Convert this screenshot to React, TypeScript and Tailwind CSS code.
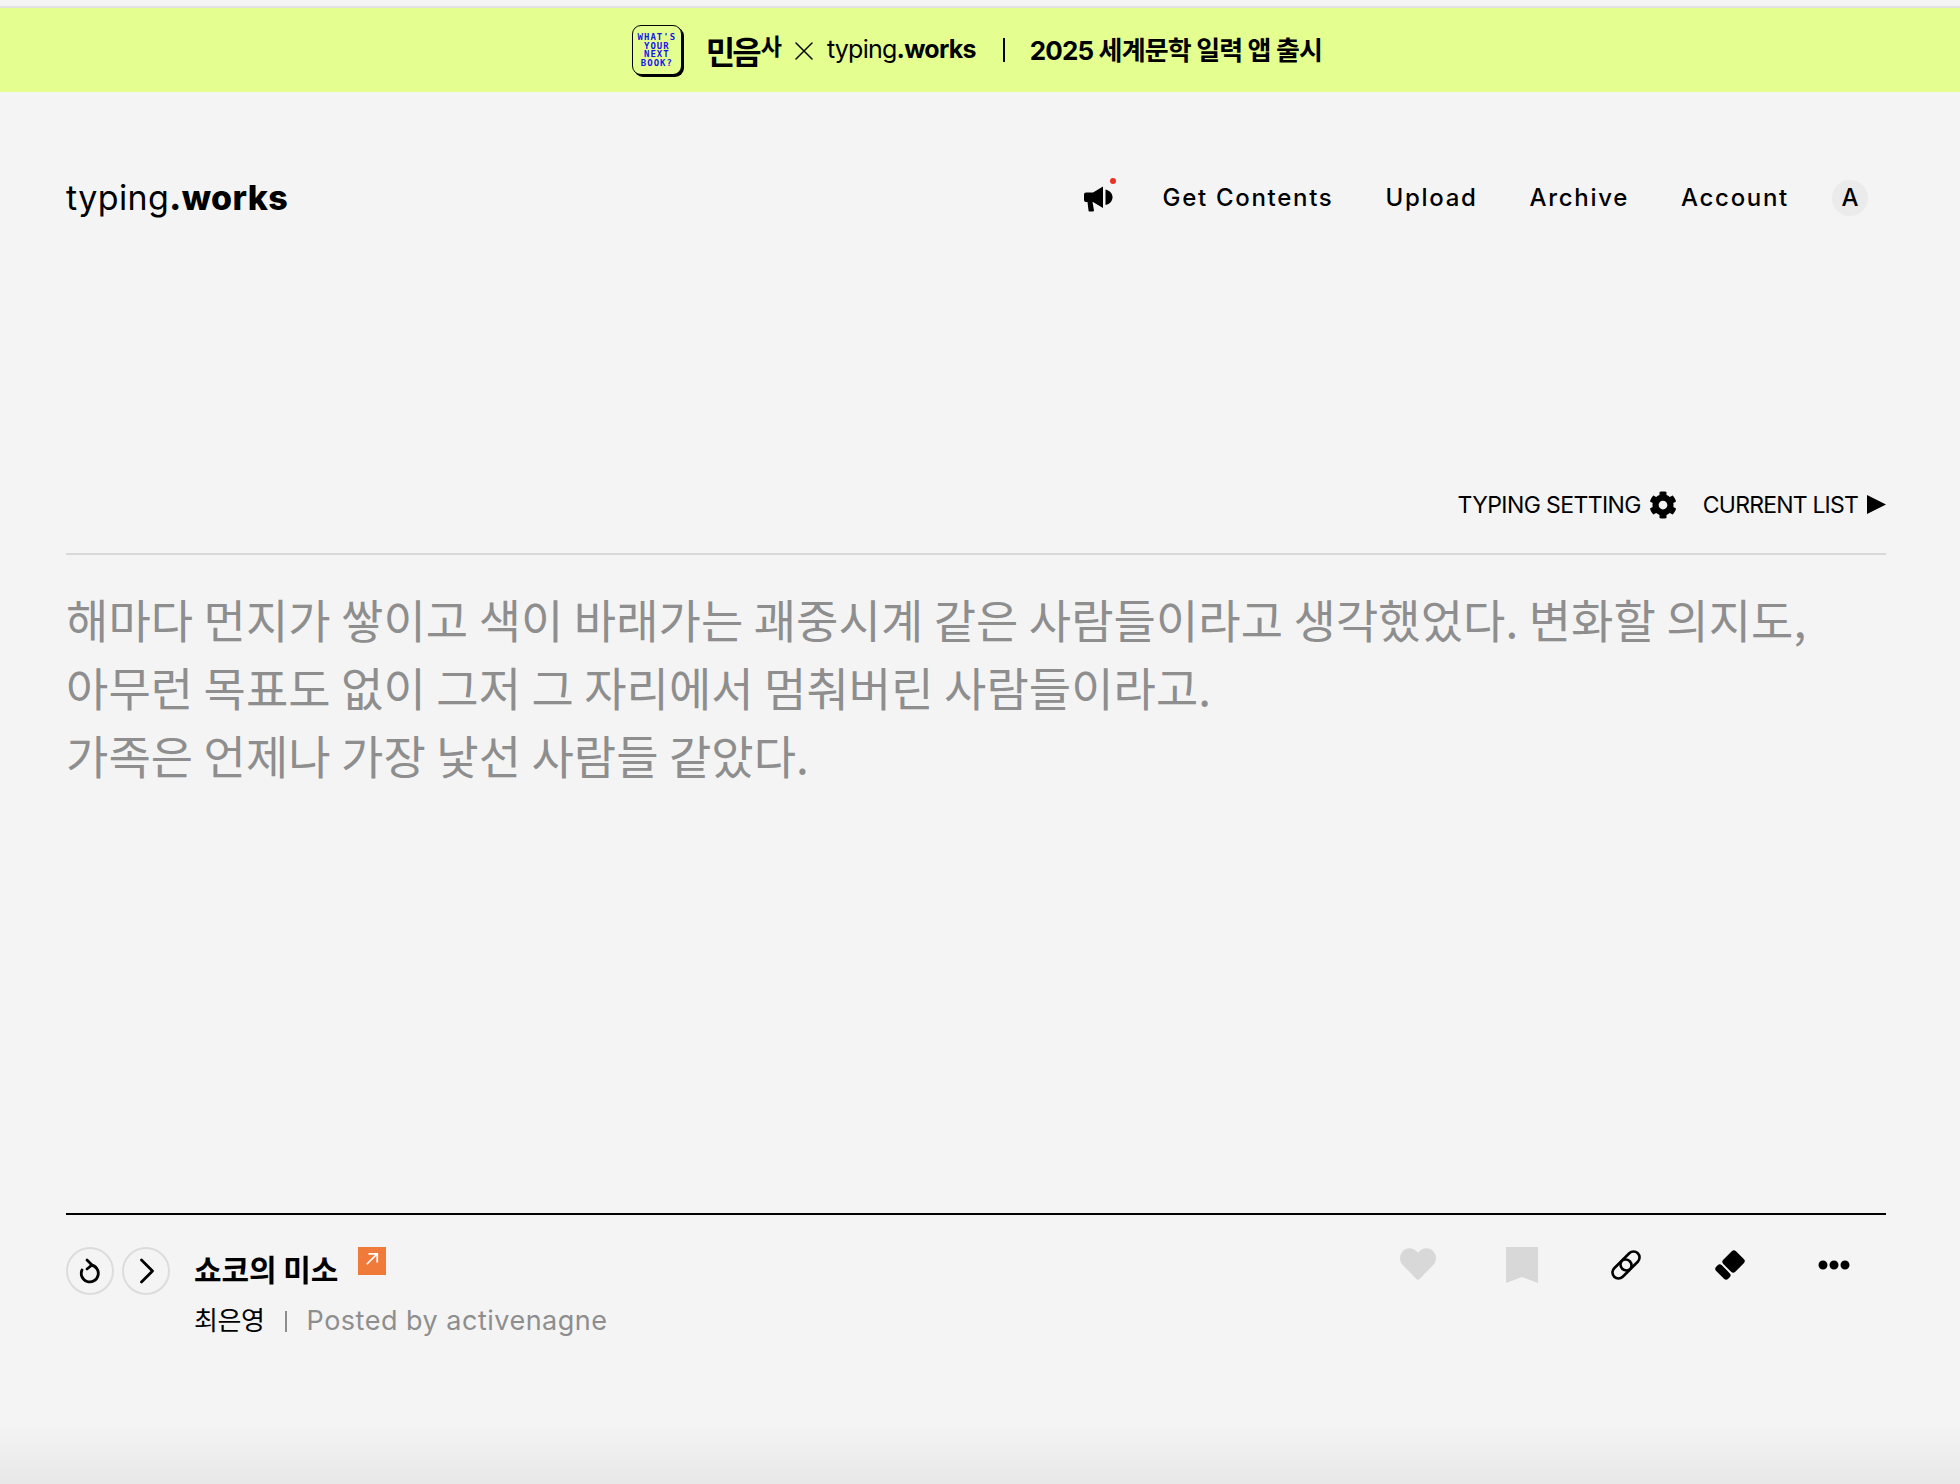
import { ChevronRight, X } from "lucide-react";
import { FaCog, FaEllipsisH, FaHeart } from "react-icons/fa";

const sans = "font-['Inter','Noto_Sans_CJK_KR',sans-serif]";

const navItems = ["Get Contents", "Upload", "Archive", "Account"];

const Banner = () => (
  <div className="mt-[6px] border-t-2 border-[#e2e2e2] bg-[#e4ff8f] h-[86px] pr-[6px] flex items-center justify-center text-black">
    <div className="w-[50px] h-[50px] rounded-[9px] border border-black bg-[#e4ff8f] shadow-[2px_2px_0_#000] flex flex-col items-center justify-center text-[9px] leading-[8.5px] font-bold tracking-[1px] text-[#1515f0] font-['DejaVu_Sans_Mono',monospace]">
      <span>WHAT'S</span>
      <span>YOUR</span>
      <span>NEXT</span>
      <span>BOOK?</span>
    </div>
    <div className="ml-[24px] flex items-start font-bold text-[32px] leading-[34px] font-['Noto_Sans_CJK_KR',sans-serif]">
      <span className="tracking-[-3px]">민음</span>
      <span className="ml-[2px] text-[23px] leading-[24px]">사</span>
    </div>
    <X className="ml-[6px] mt-[2px] w-[32px] h-[32px]" strokeWidth={1.1} />
    <div className={`ml-[7px] text-[25px] tracking-[-0.75px] ${sans}`}>
      typing<span className="font-bold">.works</span>
    </div>
    <div className="ml-[27px] w-[2px] h-[24px] bg-black" />
    <div className={`ml-[25px] text-[26px] font-bold tracking-[-0.85px] ${sans}`}>2025 세계문학 일력 앱 출시</div>
  </div>
);

const Header = () => (
  <header className="mt-[64px] flex items-center justify-between pl-[66px] pr-[92px] h-[84px]">
    <div className={`mb-[2px] text-[34px] tracking-[0.4px] text-black ${sans}`}>
      typing<span className="font-extrabold">.works</span>
    </div>
    <nav className={`flex items-center text-[24px] font-medium tracking-[1.7px] text-black ${sans}`}>
      <span className="relative mr-[50px]">
        <svg viewBox="0 0 29 28" className="w-[29px] h-[28px]" fill="black">
          <path d="M0 10.5a2 2 0 0 1 2-2h7l10-6V24l-10-6H8.5l1.5 8.5a1 1 0 0 1-1 1H5.5a1 1 0 0 1-1-1L3.5 18H2a2 2 0 0 1-2-2Z" />
          <path d="M21.5 5.5c4.5 1 7 4.2 7 7.8s-2.500 6.800-7 7.800Z" />
        </svg>
        <span className="absolute -top-[6px] right-[-3px] w-[6px] h-[6px] rounded-full bg-[#ee3024]" />
      </span>
      {navItems.map((item) => (
        <span key={item} className="mr-[52px] whitespace-nowrap">
          {item}
        </span>
      ))}
      <span className="-ml-[9px] w-[36px] h-[36px] rounded-full bg-[#ebebeb] flex items-center justify-center text-[24px] tracking-normal">A</span>
    </nav>
  </header>
);

const Passage = () => (
  <section className="pl-[66px] pr-[74px]">
    <div className={`mt-[247px] flex items-center justify-end text-[23px] leading-[36px] text-black ${sans}`}>
      <span className="tracking-[-0.6px]">TYPING SETTING</span>
      <FaCog className="ml-[8px] w-[28px] h-[28px]" />
      <span className="ml-[26px] tracking-[-0.8px]">CURRENT LIST</span>
      <svg viewBox="0 0 19 19" className="ml-[9px] w-[19px] h-[19px] mb-[2px]" fill="black">
        <path d="M0 0 19 9.500 0 19Z" />
      </svg>
    </div>
    <div className="mt-[30px] border-t-2 border-[#d8d8d8] pt-[29px] text-[46px] leading-[68px] font-normal text-[#8e8e8e] tracking-[0.07px] font-['Noto_Sans_CJK_KR',sans-serif]">
      <p>해마다 먼지가 쌓이고 색이 바래가는 괘중시계 같은 사람들이라고 생각했었다. 변화할 의지도,</p>
      <p>아무런 목표도 없이 그저 그 자리에서 멈춰버린 사람들이라고.</p>
      <p>가족은 언제나 가장 낯선 사람들 같았다.</p>
    </div>
  </section>
);

const RoundButton = ({ children }: { children: React.ReactNode }) => (
  <button className="w-[48px] h-[48px] rounded-full border-2 border-[#dcdcdc] flex items-center justify-center text-black">
    {children}
  </button>
);

const Footer = () => (
  <section className="ml-[66px] mr-[74px] mt-[425px] border-t-2 border-black flex justify-between pt-[32px]">
    <div className="flex">
      <div className="flex gap-[8px] h-[48px]">
        <RoundButton>
          <svg viewBox="0 0 24 26" className="w-[24px] h-[26px]" fill="none" stroke="black" strokeWidth="2.8" strokeLinecap="round" strokeLinejoin="round">
            <path d="M13 7a8.500 8.500 0 1 1-9 5" />
            <path d="M9 2l5 5-5 4" />
          </svg>
        </RoundButton>
        <RoundButton>
          <ChevronRight className="w-[44px] h-[44px] shrink-0 ml-[2px]" strokeWidth={1.5} />
        </RoundButton>
      </div>
      <div className="ml-[24px]">
        <div className="flex items-start h-[55px]">
          <span className="text-[30px] leading-[40px] mt-[1px] font-bold text-black tracking-[-0.1px] font-['Noto_Sans_CJK_KR',sans-serif]">쇼코의 미소</span>
          <span className="ml-[20px] w-[28px] h-[28px] bg-[#ef7a3a] flex items-center justify-center">
            <svg viewBox="0 0 16 16" className="w-[14px] h-[14px] mb-[4px]" fill="none" stroke="white" strokeWidth="2">
              <path d="M2 14 14 2M4 2H14V12" />
            </svg>
          </span>
        </div>
        <div className={`flex items-center leading-[38px] ${sans}`}>
          <span className="text-[26px] text-black tracking-[-0.4px]">최은영</span>
          <span className="ml-[20px] w-[2px] h-[21px] bg-[#8e8e8e]" />
          <span className="ml-[20px] text-[27px] text-[#8e8e8e] tracking-[0.5px]">Posted by activenagne</span>
        </div>
      </div>
    </div>
    <div className="flex items-start pr-[36px] gap-[72px]">
      <FaHeart className="w-[36px] h-[36px] text-[#d8d8d8] mt-[-1px] -mr-[2px]" />
      <svg viewBox="0 0 32 36" className="w-[32px] h-[36px] text-[#d8d8d8]" fill="currentColor">
        <path d="M0 0H32V36L16 30L0 36Z" />
      </svg>
      <svg viewBox="0 0 32 32" className="w-[32px] h-[32px] mt-[2px]" fill="none" stroke="black" strokeWidth="2.6">
        <rect x="1" y="14" width="22" height="12" rx="6" transform="rotate(-45 12 20)" />
        <rect x="9" y="6" width="22" height="12" rx="6" transform="rotate(-45 20 12)" />
      </svg>
      <svg viewBox="0 0 32 32" className="w-[32px] h-[32px] mt-[2px]" fill="black">
        <g transform="rotate(-45 16 16)">
          <rect x="2" y="7.500" width="8" height="17" rx="3" />
          <rect x="12" y="7.500" width="18" height="17" rx="3" />
        </g>
      </svg>
      <FaEllipsisH className="w-[32px] h-[32px] mt-[2px]" />
    </div>
  </section>
);

const App = () => {
  return (
    <div className="relative h-[1484px] overflow-hidden bg-[#f4f4f4]">
      <div className="bg-white">
        <Banner />
      </div>
      <Header />
      <Passage />
      <Footer />
      <div className="absolute inset-x-0 bottom-0 h-[60px] bg-gradient-to-b from-[#f4f4f4] to-[#e8e8e8]" />
    </div>
  );
};

export default App;
